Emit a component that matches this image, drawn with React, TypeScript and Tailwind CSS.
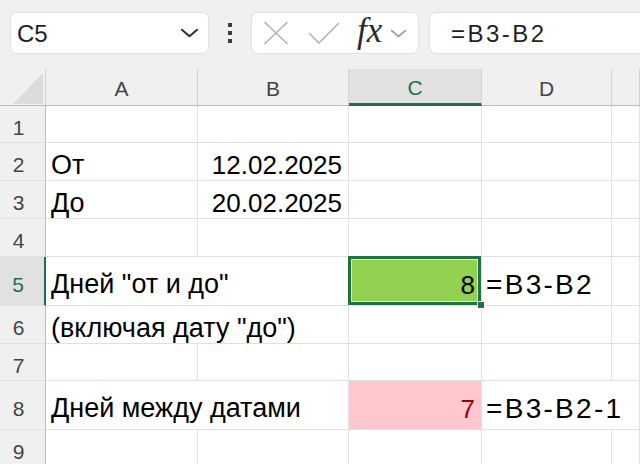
import React from "react";

type CellSpec = {
  text?: string;
  align?: "left" | "right";
  open?: boolean; // text spills into the next cell, so no right gridline
  tone?: string;
  fill?: string;
  wide?: boolean;
  label?: boolean;
};

const COLS = ["w-[152px]", "w-[151px]", "w-[133px]", "w-[130px]", "flex-1"];
const LETTERS = ["A", "B", "C", "D", ""];

const ROWS: { n: number; h: string; cells: CellSpec[] }[] = [
  { n: 1, h: "h-[37px]", cells: [{}, {}, {}, {}, {}] },
  { n: 2, h: "h-[38px]", cells: [{ text: "От", label: true }, { text: "12.02.2025", align: "right" }, {}, {}, {}] },
  { n: 3, h: "h-[38px]", cells: [{ text: "До", label: true }, { text: "20.02.2025", align: "right" }, {}, {}, {}] },
  { n: 4, h: "h-[38px]", cells: [{}, {}, {}, {}, {}] },
  {
    n: 5,
    h: "h-[49px]",
    cells: [
      { text: 'Дней "от и до"', open: true, label: true },
      {},
      { text: "8", align: "right", fill: "bg-[#92d050]" },
      { text: "=B3-B2", wide: true },
      {},
    ],
  },
  { n: 6, h: "h-[38px]", cells: [{ text: '(включая дату "до")', open: true, label: true }, {}, {}, {}, {}] },
  { n: 7, h: "h-[37px]", cells: [{}, {}, {}, {}, {}] },
  {
    n: 8,
    h: "h-[49px]",
    cells: [
      { text: "Дней между датами", open: true, label: true },
      {},
      { text: "7", align: "right", fill: "bg-[#ffc7ce]", tone: "text-[#9c0006]" },
      { text: "=B3-B2-1", wide: true, open: true },
      {},
    ],
  },
  { n: 9, h: "h-[38px]", cells: [{}, {}, {}, {}, {}] },
];

function Chevron({ className }: { className: string }) {
  return (
    <svg viewBox="0 0 20 10" className={className} fill="none">
      <polyline points="2,1.5 10,8.5 18,1.5" stroke="currentColor" strokeWidth="2" strokeLinecap="round" strokeLinejoin="round" />
    </svg>
  );
}

function Toolbar() {
  return (
    <div className="h-[69px] bg-[#f0f0f0] flex items-start pt-[12px] pl-[10px] gap-0">
      {/* name box */}
      <div className="w-[199px] h-[42px] bg-white rounded-[7px] border border-[#e0e0e0] flex items-center pl-[6px] pr-[9px]">
        <span className="flex-1 text-[24px] text-[#1f1f1f] leading-none pt-[1px]">C5</span>
        <Chevron className="w-[19px] h-[10px] text-[#2b2b2b]" />
      </div>
      {/* more options dots */}
      <div className="w-[42px] h-[42px] flex flex-col items-center justify-center gap-[4px]">
        <div className="w-[4px] h-[4px] bg-[#3c3c3c]" />
        <div className="w-[4px] h-[4px] bg-[#3c3c3c]" />
        <div className="w-[4px] h-[4px] bg-[#3c3c3c]" />
      </div>
      {/* cancel / enter / function */}
      <div className="w-[168px] h-[42px] bg-white rounded-[7px] border border-[#e0e0e0] flex items-center">
        <svg viewBox="0 0 26 24" className="ml-[11px] w-[26px] h-[24px]" fill="none">
          <line x1="1.5" y1="1" x2="24.5" y2="23" stroke="#b3b3b3" strokeWidth="1.6" />
          <line x1="24.5" y1="1" x2="1.5" y2="23" stroke="#b3b3b3" strokeWidth="1.6" />
        </svg>
        <svg viewBox="0 0 32 22" className="ml-[19px] w-[32px] h-[22px]" fill="none">
          <polyline points="1,11 11,21 31,1" stroke="#b3b3b3" strokeWidth="1.6" />
        </svg>
        <span
          className="ml-[17px] text-[35px] leading-none italic text-[#2b2b2b] -mt-[6px] tracking-[0px]"
          style={{ fontFamily: '"Liberation Serif", "DejaVu Serif", serif' }}
        >
          fx
        </span>
        <Chevron className="ml-[8px] w-[17px] h-[9px] text-[#9a9a9a]" />
      </div>
      {/* formula input */}
      <div className="ml-[10px] flex-1 h-[42px] bg-white rounded-l-[7px] border border-r-0 border-[#e0e0e0] flex items-center pl-[21px]">
        <span className="text-[24px] leading-none text-[#1f1f1f] tracking-[2.5px] pt-[1px]">=B3-B2</span>
      </div>
    </div>
  );
}

function HeaderRow() {
  return (
    <div className="flex h-[37px] bg-[#f0f0f0] border-b border-[#bdbdbd]">
      <div className="w-[46px] shrink-0 border-r border-[#d4d4d4] relative">
        <svg viewBox="0 0 30 31" className="absolute left-[13px] top-[4px] w-[30px] h-[31px]">
          <polygon points="30,0 30,31 0,31" fill="#dcdcdc" />
        </svg>
      </div>
      {COLS.map((w, i) => {
        const active = i === 2;
        return (
          <div
            key={i}
            className={`${w} shrink-0 flex items-center justify-center pt-[3px] text-[21px] border-r ${
              active
                ? "bg-[#e1e1e1] text-[#1e7145] border-[#d4d4d4] border-b-[3px] border-b-[#1e7145] -mb-px"
                : "text-[#444444] border-[#d4d4d4]"
            }`}
          >
            {LETTERS[i]}
          </div>
        );
      })}
    </div>
  );
}

function DataRow({ n, h, cells }: { n: number; h: string; cells: CellSpec[] }) {
  const active = n === 5;
  return (
    <div className={`flex ${h}`}>
      <div
        className={`w-[46px] shrink-0 flex items-center justify-center pr-[8px] pt-[7px] text-[21px] border-b border-[#e1e1e1] ${
          active
            ? "bg-[#e1e1e1] text-[#1e7145] border-r-[2px] border-r-[#1e7145]"
            : "bg-[#f0f0f0] text-[#444444] border-r border-r-[#bdbdbd]"
        }`}
      >
        {n}
      </div>
      {cells.map((c, i) => (
        <div
          key={i}
          className={`${COLS[i]} shrink-0 relative flex items-center pt-[7px] border-b border-[#e1e1e1] ${
            c.open ? "" : "border-r"
          } ${c.fill ?? ""} ${c.align === "right" ? "justify-end pr-[6px]" : "pl-[5px]"}`}
        >
          {c.text && (
            <span
              className={`whitespace-nowrap leading-none ${c.tone ?? "text-black"} ${
                c.wide ? "text-[28px] tracking-[2.3px] -ml-[1px]" : c.label ? "text-[27px]" : "text-[26px]"
              }`}
            >
              {c.text}
            </span>
          )}
          {active && i === 2 && (
            <>
              <div className="absolute -left-[1px] -top-[1px] right-0 bottom-0 border-[3px] border-[#217346] pointer-events-none">
                <div className="absolute inset-0 border border-[#d9eec9]" />
              </div>
              <div className="absolute -right-[4px] -bottom-[4px] w-[8px] h-[8px] bg-[#217346] border border-white z-10" />
            </>
          )}
        </div>
      ))}
    </div>
  );
}

export default function App() {
  return (
    <div
      className="w-[640px] h-[464px] overflow-hidden bg-white"
      style={{ fontFamily: '"Liberation Sans", Arial, sans-serif' }}
    >
      <Toolbar />
      <HeaderRow />
      {ROWS.map((r) => (
        <DataRow key={r.n} n={r.n} h={r.h} cells={r.cells} />
      ))}
    </div>
  );
}
